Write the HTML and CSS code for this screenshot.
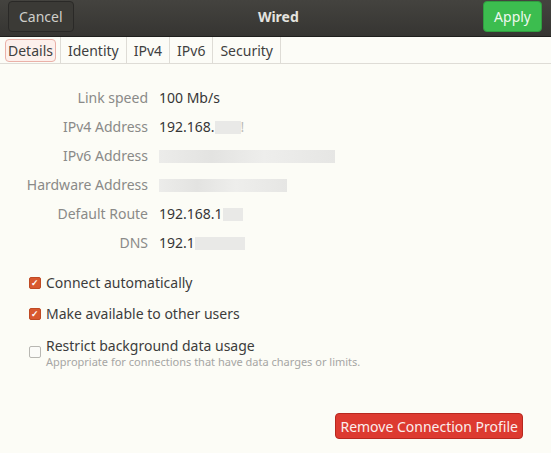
FILE: index.html
```html
<!DOCTYPE html>
<html lang="en">
<head>
    <meta charset="UTF-8">
    <title>Wired</title>
    <link rel="stylesheet" href="styles.css">
</head>
<body class="win">
    <div class="header">
        <button class="h-btn cancel">Cancel</button>
        <p class="h-title">Wired</p>
        <button class="h-btn apply">Apply</button>
    </div>

    <div class="tabs">
        <span class="tab active"><span class="tab-in">Details</span></span>
        <span class="tab">Identity</span>
        <span class="tab">IPv4</span>
        <span class="tab">IPv6</span>
        <span class="tab">Security</span>
    </div>

    <div class="info">
        <span class="lbl">Link speed</span>
        <span class="val">100 Mb/s</span>

        <span class="lbl">IPv4 Address</span>
        <span class="val">192.168.<span class="blur" style="width:26px"></span><span class="faint">!</span></span>

        <span class="lbl">IPv6 Address</span>
        <span class="val"><span class="blur long" style="width:176px"></span></span>

        <span class="lbl">Hardware Address</span>
        <span class="val"><span class="blur long" style="width:128px"></span></span>

        <span class="lbl">Default Route</span>
        <span class="val">192.168.1<span class="blur" style="width:20px"></span></span>

        <span class="lbl">DNS</span>
        <span class="val">192.1<span class="blur" style="width:50px"></span></span>
    </div>

    <div class="checks">
        <label class="chk"><span class="box on">&#10003;</span>Connect automatically</label>
        <label class="chk"><span class="box on">&#10003;</span>Make available to other users</label>
        <label class="chk top"><span class="box"></span>
            <span class="chk-text">Restrict background data usage
                <span class="hint">Appropriate for connections that have data charges or limits.</span>
            </span>
        </label>
    </div>

    <div class="bottom">
        <button class="remove">Remove Connection Profile</button>
    </div>
</body>
</html>
```

FILE: styles.css
```css
.win {
    margin: 0;
    background-color: #fcfcf6;
    font-family: "Noto Sans", "Open Sans", sans-serif;
    font-size: 14px;
    color: #3c3c3c;
    height: 453px;
    overflow: hidden;
}

.header {
    height: 37px;
    background: linear-gradient(#44433f, #363532);
    border-bottom: 1px solid #1f1f1d;
    display: flex;
    align-items: center;
    justify-content: space-between;
    padding: 0 9px 0 8px;
    box-sizing: border-box;
}

.h-btn {
    font-family: inherit;
    font-size: 14px;
    height: 31px;
    padding: 0 10px;
    border-radius: 4px;
    margin-top: -3px;
}

.cancel {
    background-color: #3b3a36;
    border: 1px solid #2a2927;
    color: #cfceca;
}

.apply {
    background-color: #3cbd4f;
    border: 1px solid #2f9e3f;
    color: #eef8ee;
}

.h-title {
    margin: 0;
    color: #e4e3df;
    font-weight: bold;
    font-size: 14px;
    margin-top: -3px;
}

.tabs {
    display: flex;
    height: 26px;
    border-bottom: 1px solid #dedcd6;
    padding-left: 3px;
    background-color: #fcfcf7;
}

.tab {
    display: flex;
    align-items: center;
    padding: 0 7px;
    border-right: 1px solid #dedcd6;
    color: #3f3f3f;
}

.tab.active {
    padding: 0 4px 0 2px;
}

.tab-in {
    border: 1px solid #eab1a8;
    background-color: #fdf0ec;
    border-radius: 4px;
    padding: 1px 2px;
}

.info {
    display: grid;
    grid-template-columns: 148px auto;
    column-gap: 11px;
    row-gap: 9px;
    margin-top: 24px;
    line-height: 20px;
}

.lbl {
    text-align: right;
    color: #8a8a88;
}

.val {
    color: #363636;
    display: flex;
    align-items: center;
}

.blur {
    display: inline-block;
    height: 13px;
    background-color: #e9e9e7;
}

.blur.long {
    background: linear-gradient(to right, #ececea, #e3e3e1 30%, #eeeeec 60%, #e6e6e4);
}

.faint {
    color: #bdbdbb;
}

.checks {
    margin-top: 20px;
    padding-left: 29px;
    display: flex;
    flex-direction: column;
    gap: 12px;
}

.chk {
    display: flex;
    align-items: center;
    gap: 5px;
    color: #3c3c3c;
    line-height: 19px;
}

.chk.top {
    align-items: flex-start;
    margin-top: 1px;
}

.chk.top .box {
    margin-top: 10px;
}

.chk-text {
    display: flex;
    flex-direction: column;
}

.box {
    width: 10px;
    height: 10px;
    border: 1px solid #b8b7b2;
    border-radius: 2px;
    background-color: #fbfbf8;
    display: flex;
    align-items: center;
    justify-content: center;
    font-size: 9px;
    font-weight: bold;
    color: #fff;
    line-height: 1;
}

.box.on {
    background-color: #d8582f;
    border-color: #bf4a24;
}

.hint {
    font-size: 11px;
    line-height: 13px;
    color: #a6a6a4;
}

.bottom {
    display: flex;
    justify-content: flex-end;
    padding-right: 28px;
    margin-top: 45px;
}

.remove {
    font-family: inherit;
    font-size: 14px;
    background-color: #dd3a30;
    border: 1px solid #b7281f;
    border-radius: 4px;
    color: #fbeeed;
    height: 26px;
    padding: 0 4px;
}
```
